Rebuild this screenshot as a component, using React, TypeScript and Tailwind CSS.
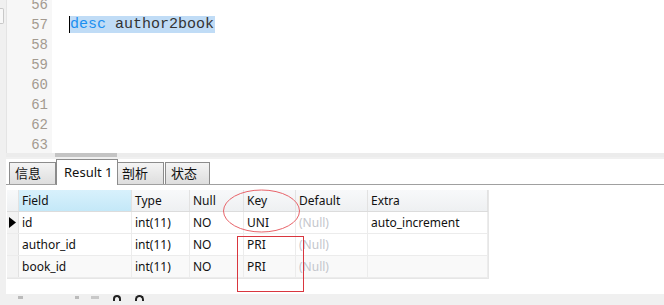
import React from "react";

const lines = [56, 57, 58, 59, 60, 61, 62, 63];

const cols = [
  { key: "ind", w: "w-[12px]" },
  { key: "Field", w: "w-[113px]" },
  { key: "Type", w: "w-[58px]" },
  { key: "Null", w: "w-[54px]" },
  { key: "Key", w: "w-[52px]" },
  { key: "Default", w: "w-[72px]" },
  { key: "Extra", w: "w-[120px]" },
];

const rows = [
  { Field: "id", Type: "int(11)", Null: "NO", Key: "UNI", Default: "(Null)", Extra: "auto_increment" },
  { Field: "author_id", Type: "int(11)", Null: "NO", Key: "PRI", Default: "(Null)", Extra: "" },
  { Field: "book_id", Type: "int(11)", Null: "NO", Key: "PRI", Default: "(Null)", Extra: "" },
];

const ui = { fontFamily: '"Noto Sans", "Noto Sans CJK SC", sans-serif' };
const mono = { fontFamily: '"Liberation Mono", "DejaVu Sans Mono", monospace' };

export default function App() {
  return (
    <div className="relative flex w-[664px] h-[305px] overflow-hidden bg-[#f0f0f0]" style={ui}>
      {/* left strip */}
      <div className="w-[6px] shrink-0 pt-[8px]">
        <div className="h-[16px] w-[4px] rounded-r-[2px] border border-l-0 border-[#c8c8c8] bg-[#f8f8f8]" />
      </div>

      <div className="flex flex-1 flex-col">
        {/* editor */}
        <div className="flex h-[156px] overflow-hidden border-l border-[#e4e4e4]">
          <div className="w-[45px] shrink-0 bg-[#f7f7f7]">
            <div className="-mt-[5px] flex flex-col items-end pr-[4px]" style={mono}>
              {lines.map((n) => (
                <div key={n} className="h-[20px] text-[14px] leading-[20px] text-[#a39a90]">
                  {n}
                </div>
              ))}
            </div>
          </div>
          <div className="flex-1 bg-white">
            <div className="-mt-[5px] pl-[17px]" style={mono}>
              <div className="h-[20px]" />
              <div className="h-[20px] text-[15px] leading-[20px]">
                <span className="border-l border-black bg-[#c0dcf6] pr-[1px]">
                  <span className="text-[#1b8ff0]">desc</span>
                  <span className="text-[#333]"> author2book</span>
                </span>
              </div>
            </div>
          </div>
        </div>
        {/* horizontal scrollbar */}
        <div className="h-[4px] bg-[#ececec] pl-[49px]">
          <div className="h-[4px] w-[62px] bg-[#c4c4c4]" />
        </div>

        {/* tabs */}
        <div className="mt-[2px] flex h-[26px] items-end bg-white pl-[3px] border-b border-[#a0a0a0]">
          <div className="flex h-[22px] w-[47px] items-center border border-b-0 border-[#8c8c8c] bg-gradient-to-b from-[#f4f4f4] to-[#dedede] pl-[5px] text-[13px] text-[#111]">
            信息
          </div>
          <div className="relative -mb-[1px] flex h-[26px] w-[62px] items-center border border-b-0 border-[#8c8c8c] bg-white pl-[7px] text-[13px] text-[#111]">
            Result 1
          </div>
          <div className="flex h-[22px] w-[46px] items-center border border-b-0 border-l-0 border-[#8c8c8c] bg-gradient-to-b from-[#f4f4f4] to-[#dedede] pl-[4px] text-[13px] text-[#111]">
            剖析
          </div>
          <div className="ml-[1px] flex h-[22px] w-[45px] items-center border border-b-0 border-[#8c8c8c] bg-gradient-to-b from-[#f4f4f4] to-[#dedede] pl-[5px] text-[13px] text-[#111]">
            状态
          </div>
        </div>

        {/* result grid */}
        <div className="h-[111px] bg-white pl-[1px] pt-[5px]">
          <div className="w-fit border-r border-b border-[#e6e6e6] text-[12px] text-[#111]">
            <div className="flex h-[22px] border-b border-[#dcdcdc] bg-gradient-to-b from-[#f8f9fa] to-[#eef0f2]">
              {cols.map((c) => (
                <div
                  key={c.key}
                  className={`${c.w} flex h-full items-center border-r border-[#e2e2e2] pl-[3px] ${
                    c.key === "Field" ? "bg-gradient-to-b from-[#d8f1fc] to-[#c4e8f8]" : ""
                  }`}
                >
                  {c.key === "ind" ? "" : c.key}
                </div>
              ))}
            </div>
            {rows.map((r, i) => (
              <div
                key={r.Field}
                className={`flex h-[22px] border-b border-[#ececec] ${i === 2 ? "bg-[#f9f9f9]" : "bg-white"}`}
              >
                {cols.map((c) => {
                  if (c.key === "ind") {
                    return (
                      <div key={c.key} className={`${c.w} flex h-full items-center border-r border-[#e2e2e2] bg-[#f3f3f3] pl-[2px]`}>
                        {i === 0 && (
                          <svg width="7" height="11" viewBox="0 0 7 11">
                            <path d="M0 0 L7 5.5 L0 11 Z" fill="#000" />
                          </svg>
                        )}
                      </div>
                    );
                  }
                  const v = (r as Record<string, string>)[c.key];
                  return (
                    <div
                      key={c.key}
                      className={`${c.w} flex h-full items-center border-r border-[#ececec] pl-[3px] ${
                        c.key === "Default" ? "text-[#c4c6cc]" : ""
                      }`}
                    >
                      {v}
                    </div>
                  );
                })}
              </div>
            ))}
          </div>
        </div>

        {/* bottom toolbar, mostly cut off */}
        <div className="flex h-[11px] items-end gap-[6px] pl-[12px]">
          <span className="mb-[6px] h-[3px] w-[5px] bg-[#bbb]" />
          <span className="ml-[46px] mb-[6px] h-[3px] w-[4px] bg-[#bbb]" />
          <span className="ml-[6px] mb-[6px] h-[3px] w-[8px] bg-[#c8c8c8]" />
          <span className="ml-[8px] mb-[4px] h-[6px] w-[8px] rounded-t-full border-[2px] border-b-0 border-[#222]" />
          <span className="ml-[8px] mb-[4px] h-[6px] w-[9px] rounded-t-full border-[2px] border-b-0 border-[#222]" />
        </div>
      </div>

      {/* annotations */}
      <svg className="pointer-events-none absolute left-0 top-0" width="664" height="305">
        <ellipse cx="261.5" cy="211" rx="38" ry="21" fill="none" stroke="#e8646a" strokeWidth="1" />
      </svg>
      <div className="pointer-events-none absolute left-[237px] top-[236px] h-[56px] w-[67px] border border-[#d9363e]" />
    </div>
  );
}
